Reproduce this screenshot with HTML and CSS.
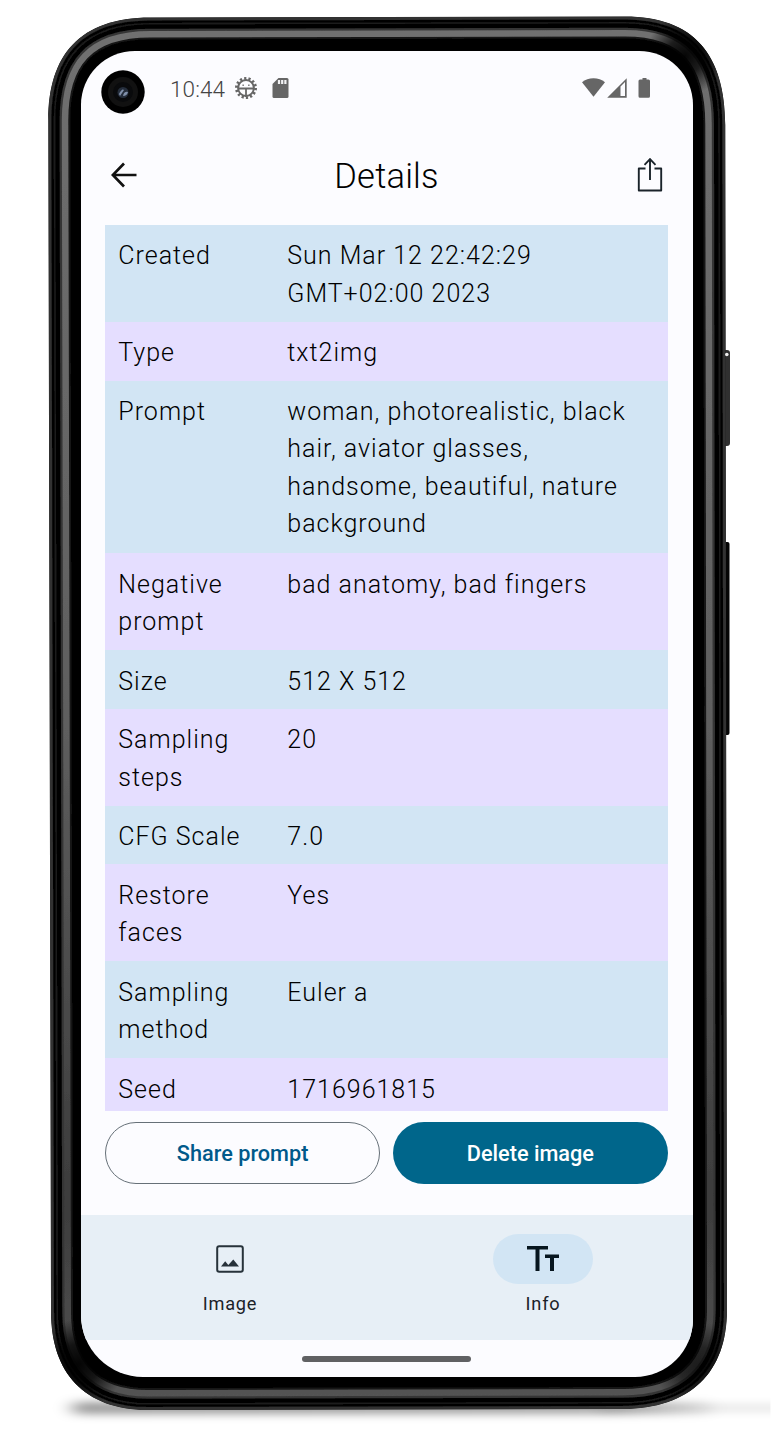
FILE: index.html
```html
<!DOCTYPE html>
<html lang="en">
<head>
<meta charset="utf-8">
<title>Details</title>
<link rel="stylesheet" href="styles.css">
</head>
<body>
<div class="stage">
  <svg class="device" viewBox="0 0 778 1440" aria-hidden="true">
    <defs>
      <path id="body" d="M48.300 120C48.300 55 80 17.500 150 17.500L625 16.500C694 16.500 725.300 55 725.300 125L727 1310C727 1372 691 1409 622 1409L148 1410C84 1410 51 1372 51 1312Z"/>
      <clipPath id="edge"><use href="#body"/></clipPath>
      <filter id="soft" x="-20%" y="-200%" width="140%" height="500%"><feGaussianBlur stdDeviation="9 4"/></filter>
      <filter id="sheen"><feGaussianBlur stdDeviation=".7"/></filter>
      <linearGradient id="metal" x1="0" y1="0" x2="0" y2="1">
        <stop offset="0" stop-color="#707070"/><stop offset=".5" stop-color="#5f5f5f"/><stop offset=".85" stop-color="#3c3c3c"/><stop offset="1" stop-color="#555"/>
      </linearGradient>
      <radialGradient id="shade"><stop offset="0" stop-color="#000" stop-opacity=".95"/><stop offset=".45" stop-color="#000" stop-opacity=".75"/><stop offset="1" stop-color="#000" stop-opacity="0"/></radialGradient>
      <linearGradient id="fade"><stop offset="0" stop-color="#000" stop-opacity=".4"/><stop offset=".85" stop-color="#000" stop-opacity=".36"/><stop offset="1" stop-color="#000" stop-opacity=".07"/></linearGradient>
      <clipPath id="ground"><path d="M0 1380H770.500V1440H0Z"/></clipPath>
    </defs>
    <g clip-path="url(#ground)"><rect x="72" y="1402" width="640" height="12" rx="6" fill="url(#fade)" filter="url(#soft)"/><rect x="600" y="1404" width="200" height="8" fill="#000" opacity=".09" filter="url(#soft)"/></g>
    <rect x="722" y="350" width="8" height="96" rx="3" fill="#303030"/>
    <rect x="722" y="542" width="7.500" height="193" rx="2" fill="#050505"/>
    <g clip-path="url(#edge)" fill="none">
      <use href="#body" fill="#000"/>
      <g filter="url(#sheen)">
        <use href="#body" stroke="#141414" stroke-width="44"/>
        <use href="#body" stroke="url(#metal)" stroke-width="40"/>
        <use href="#body" stroke="#353535" stroke-width="27"/>
        <use href="#body" stroke="#000" stroke-width="22.500"/>
        <use href="#body" stroke="#1b1b1b" stroke-width="14"/>
        <use href="#body" stroke="#060606" stroke-width="11"/>
        <use href="#body" stroke="#303030" stroke-width="6"/>
      </g>
      <circle cx="685" cy="56" r="40" fill="url(#shade)"/>
      <circle cx="79" cy="1364" r="45" fill="url(#shade)"/>
      <circle cx="700" cy="1367" r="45" fill="url(#shade)" opacity=".7"/>
    </g>
    <circle cx="726.800" cy="354.500" r="1.800" fill="#eee"/>
  </svg>

  <main class="screen">
    <header class="status">
      <svg class="camera" viewBox="0 0 44 44"><circle cx="22" cy="22" r="21.700" fill="#000"/><circle cx="22" cy="22" r="15" fill="#111"/><circle cx="22" cy="22" r="10" fill="#090a0c"/><circle cx="22" cy="22.500" r="5.500" fill="#252e3c"/><path d="M18 24q3-6 5-4l-4 6M22 26q1-5 5-4-1 4-5 4" fill="#8090aa"/></svg>
      <span class="time">10:44</span>
      <svg class="gear" viewBox="0 0 24 24" fill="none" stroke="#666"><circle cx="12" cy="12" r="9.600" stroke-width="2.800" stroke-dasharray="2.200 2.109"/><circle cx="12" cy="12" r="7.900" stroke-width="2"/><path d="M4 12.500H20M12 12.500V21" stroke-width="1.800"/><path d="M8.500 9.200h1.300M14.200 9.200h1.300" stroke-width="1.400"/></svg>
      <svg class="card" viewBox="0 0 16 20"><path d="M6 0H14.500Q16 0 16 1.500V18.500Q16 20 14.500 20H1.500Q0 20 0 18.500V6Z" fill="#666"/><path d="M6.500 2V6M9.700 2V6M12.900 2V6" stroke="#f2f2f4" stroke-width="2.200"/></svg>
      <span class="space"></span>
      <svg class="signals" viewBox="0 0 70 20" fill="#666"><path d="M0 4.200C6-1.100 17-1.100 23 4.200L11.500 18.700Z"/><path d="M25.200 19.700 44.700.2V19.700ZM38.500 8.500V18h4.500V4Z" fill-rule="evenodd"/><path d="M60.500 0H64.500V1.500H66.500Q68 1.500 68 3V18.200Q68 19.700 66.500 19.700H58Q56.500 19.700 56.500 18.200V3Q56.500 1.500 58 1.500H60.500Z"/></svg>
    </header>

    <div class="appbar">
      <svg class="back" viewBox="0 0 26 26" fill="none" stroke="#111" stroke-width="2.700"><path d="M25.500 13H2.500M13 1.500 1.800 13 13 24.500"/></svg>
      <h1>Details</h1>
      <svg class="share" viewBox="0 0 26 36" fill="none" stroke="#1a232a" stroke-width="1.900"><path d="M8.500 11.500H1.800V33.500H24.200V11.500H17.500" stroke-linejoin="round"/><path d="M13 23V2.500M7.500 7.800 13 2.200 18.500 7.800"/></svg>
    </div>

    <dl class="table">
      <div class="row two"><dt>Created</dt><dd>Sun Mar 12 22:42:29<br>GMT+02:00 2023</dd></div>
      <div class="row"><dt>Type</dt><dd>txt2img</dd></div>
      <div class="row four"><dt>Prompt</dt><dd>woman, photorealistic, black<br>hair, aviator glasses,<br>handsome, beautiful, nature<br>background</dd></div>
      <div class="row two"><dt>Negative<br>prompt</dt><dd>bad anatomy, bad fingers</dd></div>
      <div class="row"><dt>Size</dt><dd>512 X 512</dd></div>
      <div class="row two"><dt>Sampling<br>steps</dt><dd>20</dd></div>
      <div class="row"><dt>CFG Scale</dt><dd>7.0</dd></div>
      <div class="row two"><dt>Restore<br>faces</dt><dd>Yes</dd></div>
      <div class="row two"><dt>Sampling<br>method</dt><dd>Euler a</dd></div>
      <div class="row"><dt>Seed</dt><dd>1716961815</dd></div>
    </dl>

    <div class="actions">
      <button class="btn outline">Share prompt</button>
      <button class="btn solid">Delete image</button>
    </div>

    <nav class="tabs">
      <a class="tab"><span class="pill"><svg class="pic" viewBox="0 0 28 28"><rect x="1.200" y="1.200" width="25.600" height="25.600" rx="2" fill="none" stroke="#27323a" stroke-width="2"/><path d="M5 21.500 9.200 16.300 12.300 20 17.300 14.500 23 21.500Z" fill="#27323a"/></svg></span>Image</a>
      <a class="tab active"><span class="pill"><svg class="type" viewBox="0 0 32 26" fill="#07161f"><path d="M0 0H21V3.600H12.500V25H8.500V3.600H0ZM18 8.400H32V12H27V25H23V12H18Z"/></svg></span>Info</a>
    </nav>
    <div class="home"><span class="bar"></span></div>
  </main>
</div>
</body>
</html>
```
FILE: styles.css
```css
* { box-sizing: border-box; }
body { margin: 0; background: #fff; font-family: Roboto, "Liberation Sans", sans-serif; }
.stage { position: relative; width: 778px; height: 1440px; padding: 51px 85px 0 81px; overflow: hidden; }
.device { position: absolute; top: 0; left: 0; width: 778px; height: 1440px; }
.screen {
  position: relative; display: flex; flex-direction: column;
  width: 612px; height: 1325.500px; overflow: hidden; background: #fcfcff;
  border-radius: 54px 54px 58px 62px;
}
.status { display: flex; align-items: center; height: 74px; flex: none; padding: 0 41px 0 20px; color: #666; }
.camera { width: 44px; height: 44px; margin-top: 8px; }
.time { margin: 1px 0 0 25px; font-size: 22.500px; font-weight: 300; letter-spacing: .1px; width: 56px; white-space: nowrap; color: #444; }
.gear { width: 24px; height: 24px; margin-left: 7.500px; }
.card { width: 17px; height: 20px; margin-left: 14px; }
.space { flex: 1; }
.signals { width: 70px; height: 20px; }
.appbar { display: grid; grid-template-columns: 26px 1fr 26px; align-items: center; height: 100px; flex: none; padding: 0 30px; }
.back { width: 26px; height: 26px; }
.share { width: 26px; height: 36px; }
h1 { margin: 2px 1px 0 0; text-align: center; font-size: 34.500px; font-weight: 350; letter-spacing: .2px; color: #000; }
.table { width: 563px; height: 886px; flex: none; margin: 0 0 0 24px; overflow: hidden; font-size: 25px; font-weight: 300; line-height: 37.500px; letter-spacing: 1px; color: #000; }
.row { display: grid; grid-template-columns: 169px 1fr; height: 58.500px; padding: 12.300px 13.300px 0; background: #d2e5f4; white-space: nowrap; }
.row:nth-child(even) { background: #e5deff; }
.row.two { height: 97px; }
.row.four { height: 172.800px; }
dt, dd { margin: 0; }
.actions { display: grid; grid-template-columns: 1fr 1fr; gap: 12.500px; flex: none; height: 62px; margin: 10.500px 25px 0 24px; }
.btn { border: 0; border-radius: 31px; font: 500 21.700px Roboto, sans-serif; letter-spacing: 0; padding: 2px 0 0; }
.outline { background: transparent; border: 1.500px solid #667078; color: #00598a; }
.solid { background: #00668b; color: #fff; }
.tabs { display: grid; grid-template-columns: 1fr 1fr; gap: 14px; flex: none; height: 125px; margin-top: 31.500px; background: #e7eff6; }
.tab { display: flex; flex-direction: column; align-items: center; padding: 18.500px 1px 0 0; font-size: 18.200px; font-weight: 400; line-height: 25px; letter-spacing: .8px; color: #1b2228; }
.pill { display: flex; align-items: center; justify-content: center; width: 100px; height: 50px; margin-bottom: 7.500px; border-radius: 25px; }
.active .pill { background: #d2e5f4; }
.pic { width: 28px; height: 28px; }
.type { width: 32px; height: 26px; }
.home { display: flex; justify-content: center; padding: 15.500px 1px 0 0; }
.bar { width: 169px; height: 6px; border-radius: 3px; background: #606163; }
```
